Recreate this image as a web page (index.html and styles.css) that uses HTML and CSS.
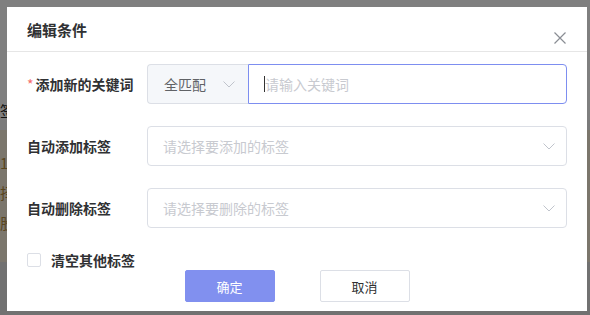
FILE: index.html
```html
<!DOCTYPE html>
<html lang="zh-CN">
<head>
    <meta charset="UTF-8">
    <title>编辑条件</title>
    <link rel="stylesheet" href="styles.css">
</head>
<body>
    <div class="page">
        <div class="page-top"></div>
        <div class="page-band">
            <span class="band-text">签</span>
        </div>
        <div class="page-card">
            <span class="card-text">11</span>
            <span class="card-text">择</span>
            <span class="card-text">股</span>
        </div>
        <div class="page-rest"></div>
    </div>
    <div class="mask"></div>

    <div class="dialog">
        <div class="dialog-header">
            <span class="dialog-title">编辑条件</span>
            <svg class="dialog-close" viewBox="0 0 12 12" width="12" height="12">
                <path d="M0.5 0.5 L11.5 11.5 M11.5 0.5 L0.5 11.5" stroke="#8a8d94" stroke-width="1.2" fill="none"/>
            </svg>
        </div>
        <div class="dialog-body">
            <div class="form-row">
                <label class="form-label"><i class="required">*</i>添加新的关键词</label>
                <div class="form-field">
                    <div class="match-select">
                        <span>全匹配</span>
                        <svg class="chevron" viewBox="0 0 12 7" width="12" height="7">
                            <path d="M0.5 0.5 L6 6 L11.5 0.5" stroke="#c0c4cc" stroke-width="1" fill="none"/>
                        </svg>
                    </div>
                    <div class="keyword-input">
                        <span class="caret"></span>
                        <span class="placeholder">请输入关键词</span>
                    </div>
                </div>
            </div>
            <div class="form-row">
                <label class="form-label">自动添加标签</label>
                <div class="form-field select-box">
                    <span class="placeholder">请选择要添加的标签</span>
                    <svg class="chevron" viewBox="0 0 12 7" width="12" height="7">
                        <path d="M0.5 0.5 L6 6 L11.5 0.5" stroke="#c0c4cc" stroke-width="1" fill="none"/>
                    </svg>
                </div>
            </div>
            <div class="form-row">
                <label class="form-label">自动删除标签</label>
                <div class="form-field select-box">
                    <span class="placeholder">请选择要删除的标签</span>
                    <svg class="chevron" viewBox="0 0 12 7" width="12" height="7">
                        <path d="M0.5 0.5 L6 6 L11.5 0.5" stroke="#c0c4cc" stroke-width="1" fill="none"/>
                    </svg>
                </div>
            </div>
            <div class="check-row">
                <span class="checkbox"></span>
                <span class="check-label">清空其他标签</span>
            </div>
        </div>
        <div class="dialog-footer">
            <button class="btn btn-primary">确定</button>
            <button class="btn btn-default">取消</button>
        </div>
    </div>
</body>
</html>
```

FILE: styles.css
```css
body {
    margin: 0;
    padding: 0;
    width: 590px;
    height: 315px;
    overflow: hidden;
    font-family: "Noto Sans CJK SC", "Noto Sans", sans-serif;
    background-color: #fff;
}

/* page under the mask */
.page {
    display: flex;
    flex-direction: column;
    height: 315px;
    background-color: #f4f4f4;
}
.page-top {
    height: 100px;
    background-color: #fff;
}
.page-band {
    height: 20px;
    background-color: #fff;
    font-size: 14px;
    line-height: 20px;
    color: #222;
}
.page-card {
    height: 132px;
    margin-top: 10px;
    background-color: #f6ecd8;
    display: flex;
    flex-direction: column;
    padding-top: 18px;
    box-sizing: border-box;
}
.card-text {
    font-size: 15px;
    line-height: 30px;
    color: #b58a3c;
}
.page-rest {
    flex: 1;
    background-color: #e2e2e2;
}
.mask {
    position: absolute;
    inset: 0;
    background-color: rgba(0, 0, 0, 0.5);
}

/* dialog */
.dialog {
    position: absolute;
    left: 7px;
    top: 7px;
    width: 580px;
    height: 304px;
    background-color: #fff;
    box-sizing: border-box;
}
.dialog-header {
    position: relative;
    height: 45px;
    border-bottom: 1px solid #e6e6e6;
    box-sizing: border-box;
    padding-left: 20px;
    display: flex;
    align-items: center;
}
.dialog-title {
    font-size: 15px;
    font-weight: bold;
    color: #303133;
}
.dialog-close {
    position: absolute;
    right: 21px;
    top: 25px;
}
.dialog-body {
    padding: 12px 20px 0 20px;
}
.form-row {
    display: flex;
    align-items: center;
    height: 40px;
    margin-bottom: 22px;
}
.form-label {
    width: 120px;
    flex-shrink: 0;
    font-size: 14px;
    font-weight: bold;
    color: #303133;
}
.required {
    font-style: normal;
    font-weight: normal;
    color: #f56c6c;
    margin-right: 2px;
}
.form-field {
    flex: 1;
    height: 40px;
    display: flex;
    box-sizing: border-box;
}
.match-select {
    width: 101px;
    height: 40px;
    box-sizing: border-box;
    border: 1px solid #dcdfe6;
    border-right: none;
    border-radius: 4px 0 0 4px;
    background-color: #f5f7fa;
    display: flex;
    align-items: center;
    padding-left: 16px;
    font-size: 14px;
    color: #606266;
}
.match-select .chevron {
    margin-left: 17px;
}
.keyword-input {
    flex: 1;
    height: 40px;
    box-sizing: border-box;
    border: 1px solid #7d8ef0;
    border-radius: 0 4px 4px 0;
    display: flex;
    align-items: center;
    padding-left: 15px;
}
.caret {
    width: 1px;
    height: 16px;
    background-color: #333;
}
.placeholder {
    font-size: 14px;
    color: #c8cad0;
}
.select-box {
    border: 1px solid #dcdfe6;
    border-radius: 4px;
    align-items: center;
    justify-content: space-between;
    padding: 0 11px 0 15px;
}
.check-row {
    display: flex;
    align-items: center;
    height: 20px;
    margin-top: 0;
}
.checkbox {
    width: 12px;
    height: 12px;
    border: 1px solid #dcdfe6;
    border-radius: 2px;
    margin-right: 10px;
}
.check-label {
    font-size: 14px;
    font-weight: bold;
    color: #303133;
}
.dialog-footer {
    display: flex;
    justify-content: center;
    gap: 45px;
    margin-top: 0;
}
.btn {
    width: 90px;
    height: 32px;
    font-family: "Noto Sans CJK SC", sans-serif;
    font-size: 13px;
    border-radius: 2px;
    cursor: pointer;
}
.btn-primary {
    background-color: #8190ef;
    border: 1px solid #8190ef;
    color: #fff;
}
.btn-default {
    background-color: #fff;
    border: 1px solid #dcdfe6;
    color: #303133;
}
```
